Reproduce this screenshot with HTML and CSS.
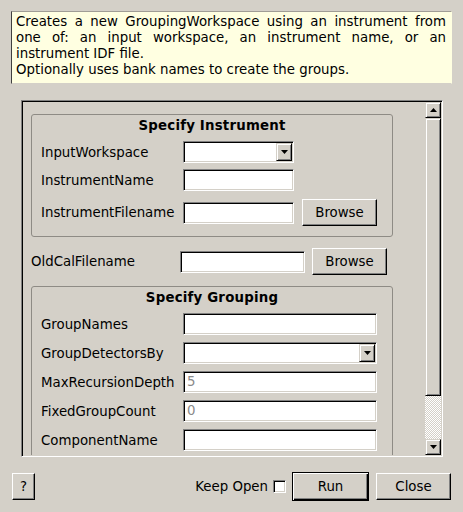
FILE: index.html
```html
<!DOCTYPE html>
<html>
<head>
<meta charset="utf-8">
<link rel="stylesheet" href="styles.css">
</head>
<body>
<div class="desc">
  <span class="jl">Creates a new GroupingWorkspace using an instrument from</span>
  <span class="jl">one of: an input workspace, an instrument name, or an</span>
  <span class="ln">instrument IDF file.</span>
  <span class="ln">Optionally uses bank names to create the groups.</span>
</div>

<div class="frame">
  <div class="viewport">
    <div class="group">
      <div class="gtitle">Specify Instrument</div>
      <div class="row">
        <div class="label">InputWorkspace</div>
        <div class="field combo w111"><div class="arrowbtn"><svg width="7" height="4" viewBox="0 0 7 4"><polygon points="0,0 7,0 3.5,4" fill="#000"/></svg></div></div>
      </div>
      <div class="row gap6">
        <div class="label">InstrumentName</div>
        <div class="field w111"></div>
      </div>
      <div class="row tall gap8">
        <div class="label">InstrumentFilename</div>
        <div class="field w111"></div>
        <div class="btn browse">Browse</div>
      </div>
    </div>

    <div class="row tall oldcal">
      <div class="label wide">OldCalFilename</div>
      <div class="field w125"></div>
      <div class="btn browse b7">Browse</div>
    </div>

    <div class="group g2">
      <div class="gtitle">Specify Grouping</div>
      <div class="row">
        <div class="label">GroupNames</div>
        <div class="field w194"></div>
      </div>
      <div class="row gap7">
        <div class="label">GroupDetectorsBy</div>
        <div class="field combo w194"><div class="arrowbtn"><svg width="7" height="4" viewBox="0 0 7 4"><polygon points="0,0 7,0 3.5,4" fill="#000"/></svg></div></div>
      </div>
      <div class="row gap7">
        <div class="label">MaxRecursionDepth</div>
        <div class="field w194 grey">5</div>
      </div>
      <div class="row gap7">
        <div class="label">FixedGroupCount</div>
        <div class="field w194 grey">0</div>
      </div>
      <div class="row gap7">
        <div class="label">ComponentName</div>
        <div class="field w194"></div>
      </div>
    </div>
  </div>
  <div class="scrollbar">
    <div class="sbtn"><svg width="7" height="4" viewBox="0 0 7 4"><polygon points="0,4 7,4 3.5,0" fill="#000"/></svg></div>
    <div class="handle"></div>
    <div class="trough"></div>
    <div class="sbtn"><svg width="7" height="4" viewBox="0 0 7 4"><polygon points="0,0 7,0 3.5,4" fill="#000"/></svg></div>
  </div>
</div>

<div class="bottom">
  <div class="btn help">?</div>
  <div class="spacer"></div>
  <div class="keep">Keep Open</div>
  <div class="check"></div>
  <div class="btn run">Run</div>
  <div class="btn close">Close</div>
</div>
</body>
</html>
```
FILE: styles.css
```css
html, body {
  margin: 0;
  padding: 0;
}
body {
  width: 463px;
  height: 512px;
  background: #d4d0c8;
  font-family: "DejaVu Sans", sans-serif;
  font-size: 13.33px;
  color: #000;
  overflow: hidden;
}

.desc {
  margin: 11px 0 0 11px;
  width: 441px;
  height: 73px;
  box-sizing: border-box;
  background: #ffffe1;
  border: 1px solid;
  border-color: #a09d96 #ffffe1 #d4d0c8 #404040;
  padding: 2px 5px 0 4px;
  line-height: 16px;
}
.desc .jl {
  display: block;
  text-align: justify;
  text-align-last: justify;
}
.desc .ln {
  display: block;
}

.frame {
  margin: 16px 0 0 21px;
  width: 422px;
  height: 357px;
  box-sizing: border-box;
  border: 1px solid;
  border-color: #808080 #fff #fff #808080;
  box-shadow: inset 1px 1px #000, inset -1px -1px #d4d0c8;
  padding: 1px;
  display: flex;
}
.viewport {
  flex: 1;
  overflow: hidden;
  display: flex;
  flex-direction: column;
  align-items: flex-start;
}

.group {
  flex: none;
  margin: 12px 0 0 8px;
  width: 362px;
  box-sizing: border-box;
  border: 1px solid #8e8b85;
  border-radius: 3px;
  padding: 3px 0 10px 9px;
}
.group.g2 {
  margin-top: 11px;
}
.gtitle {
  font-weight: bold;
  text-align: center;
  line-height: 16px;
  letter-spacing: 0.2px;
  margin: 0 0 7px -9px;
}

.row {
  display: flex;
  align-items: center;
  height: 22px;
  flex: none;
}
.row.tall {
  height: 27px;
}
.row.gap6 { margin-top: 6px; }
.row.gap7 { margin-top: 7px; }
.row.gap8 { margin-top: 8px; }
.row.oldcal {
  margin: 11px 0 0 8px;
}

.label {
  width: 142px;
  white-space: nowrap;
}
.label.wide {
  width: 149px;
}

.field {
  height: 22px;
  box-sizing: border-box;
  background: #fff;
  border: 1px solid;
  border-color: #808080 #fff #fff #808080;
  box-shadow: inset 1px 1px #000, inset -1px -1px #d4d0c8;
  padding: 0 2px 0 3px;
  line-height: 20px;
}
.field.grey {
  color: #8a8a8a;
}
.w111 { width: 111px; }
.w125 { width: 125px; }
.w194 { width: 194px; }

.combo {
  display: flex;
  justify-content: flex-end;
  padding: 1px;
}
.arrowbtn {
  width: 16px;
  height: 18px;
  box-sizing: border-box;
  background: #d4d0c8;
  border: 1px solid;
  border-color: #d4d0c8 #000 #000 #d4d0c8;
  box-shadow: inset 1px 1px #fff, inset -1px -1px #808080;
  display: flex;
  align-items: center;
  justify-content: center;
}

.btn {
  box-sizing: border-box;
  background: #d4d0c8;
  border: 1px solid;
  border-color: #fff #000 #000 #fff;
  box-shadow: inset -1px -1px #808080, inset 1px 1px #d4d0c8;
  display: flex;
  align-items: center;
  justify-content: center;
  flex: none;
}
.browse {
  width: 75px;
  height: 27px;
  margin-left: 8px;
}
.browse.b7 {
  margin-left: 7px;
}

.scrollbar {
  width: 16px;
  display: flex;
  flex-direction: column;
}
.sbtn {
  width: 16px;
  height: 16px;
  box-sizing: border-box;
  background: #d4d0c8;
  border: 1px solid;
  border-color: #d4d0c8 #000 #000 #d4d0c8;
  box-shadow: inset 1px 1px #fff, inset -1px -1px #808080;
  display: flex;
  align-items: center;
  justify-content: center;
}
.handle {
  height: 278px;
  box-sizing: border-box;
  background: #d4d0c8;
  border: 1px solid;
  border-color: #d4d0c8 #000 #000 #d4d0c8;
  box-shadow: inset 1px 1px #fff, inset -1px -1px #808080;
}
.trough {
  flex: 1;
  background: repeating-conic-gradient(#fff 0 25%, #d4d0c8 0 50%) 0 0 / 2px 2px;
}

.bottom {
  display: flex;
  align-items: center;
  margin: 15px 12px 0 12px;
  height: 29px;
}
.help {
  width: 23px;
  height: 27px;
}
.spacer {
  flex: 1;
}
.keep {
  margin-right: 5px;
  white-space: nowrap;
}
.check {
  width: 13px;
  height: 13px;
  box-sizing: border-box;
  background: #fff;
  border: 1px solid;
  border-color: #808080 #fff #fff #808080;
  box-shadow: inset 1px 1px #000, inset -1px -1px #d4d0c8;
  margin-right: 6px;
}
.run {
  width: 77px;
  height: 29px;
  border: 1px solid #000;
  box-shadow: inset 1px 1px #fff, inset -1px -1px #000, inset -2px -2px #808080;
  margin-right: 7px;
}
.close {
  width: 75px;
  height: 27px;
}
```
